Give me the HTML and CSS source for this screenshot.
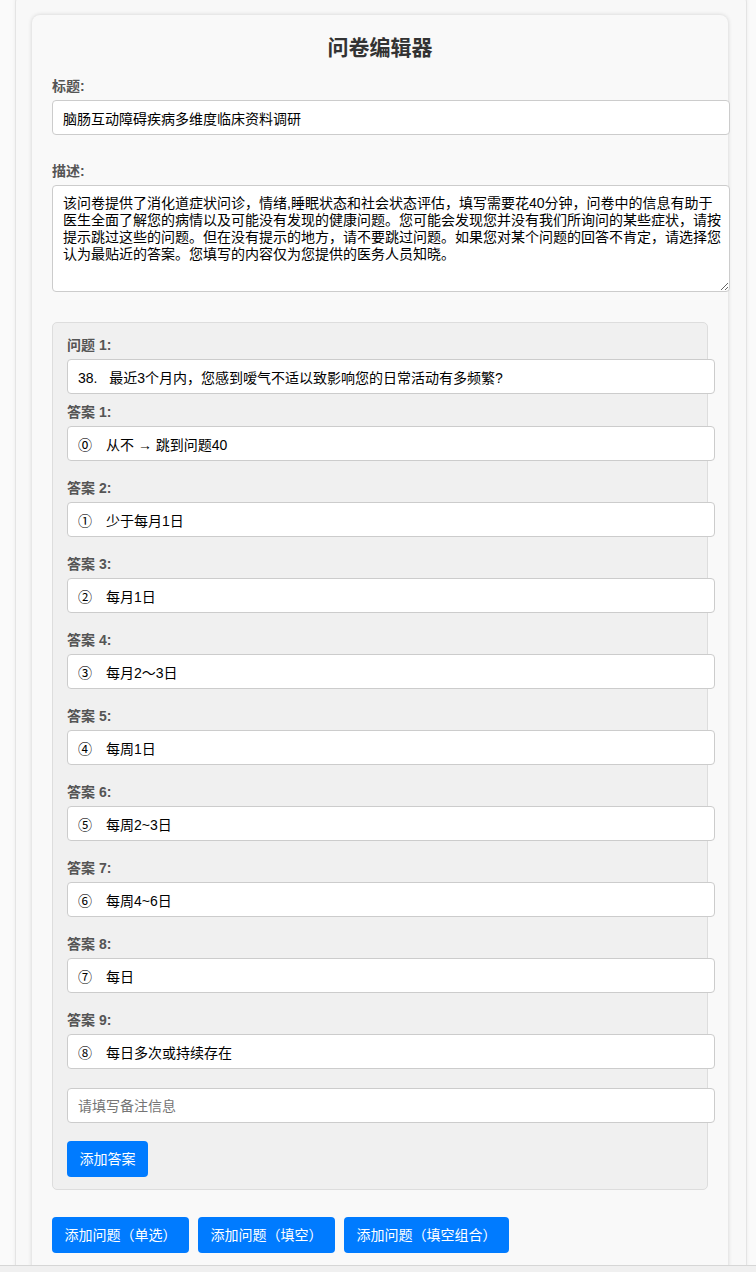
FILE: index.html
```html
<!DOCTYPE html>
<html lang="zh-CN">
<head>
    <meta charset="UTF-8">
    <meta name="viewport" content="width=device-width, initial-scale=1.0">
    <title>问卷编辑器</title>
    <link rel="stylesheet" href="styles.css">
</head>
<body>
    <div class="page">
        <div class="editor">
            <h2>问卷编辑器</h2>

            <label for="titulo">标题:</label>
            <input type="text" id="titulo" class="title-input" value="脑肠互动障碍疾病多维度临床资料调研">

            <label for="descricao">描述:</label>
            <textarea id="descricao">该问卷提供了消化道症状问诊，情绪,睡眠状态和社会状态评估，填写需要花40分钟，问卷中的信息有助于医生全面了解您的病情以及可能没有发现的健康问题。您可能会发现您并没有我们所询问的某些症状，请按提示跳过这些的问题。但在没有提示的地方，请不要跳过问题。如果您对某个问题的回答不肯定，请选择您认为最贴近的答案。您填写的内容仅为您提供的医务人员知晓。</textarea>

            <div class="question">
                <label>问题 1:</label>
                <input type="text" class="question-input" value="38.   最近3个月内，您感到嗳气不适以致影响您的日常活动有多频繁?">

                <div class="answer">
                    <label>答案 1:</label>
                    <input type="text" value="⓪　从不 → 跳到问题40">
                </div>
                <div class="answer">
                    <label>答案 2:</label>
                    <input type="text" value="①　少于每月1日">
                </div>
                <div class="answer">
                    <label>答案 3:</label>
                    <input type="text" value="②　每月1日">
                </div>
                <div class="answer">
                    <label>答案 4:</label>
                    <input type="text" value="③　每月2〜3日">
                </div>
                <div class="answer">
                    <label>答案 5:</label>
                    <input type="text" value="④　每周1日">
                </div>
                <div class="answer">
                    <label>答案 6:</label>
                    <input type="text" value="⑤　每周2~3日">
                </div>
                <div class="answer">
                    <label>答案 7:</label>
                    <input type="text" value="⑥　每周4~6日">
                </div>
                <div class="answer">
                    <label>答案 8:</label>
                    <input type="text" value="⑦　每日">
                </div>
                <div class="answer">
                    <label>答案 9:</label>
                    <input type="text" value="⑧　每日多次或持续存在">
                </div>

                <input type="text" class="remark" placeholder="请填写备注信息">
                <button>添加答案</button>
            </div>

            <div class="actions">
                <button>添加问题（单选）</button>
                <button>添加问题（填空）</button>
                <button>添加问题（填空组合）</button>
            </div>
        </div>
    </div>

    <div class="scroll-track"></div>
</body>
</html>
```

FILE: styles.css
```css
body {
    font-family: "Liberation Sans", Arial, "Noto Sans CJK SC", sans-serif;
    background-color: #fafafa;
    color: #000;
    margin: 0;
    padding: 0;
}
.page {
    width: 732px;
    box-sizing: border-box;
    margin: -6px 0 0 15px;
    padding: 20px 18px 60px 16px;
    background-color: #f8f8f8;
    border: 1px solid #e4e4e4;
    border-radius: 8px;
    box-shadow: 0 0 4px rgba(0, 0, 0, 0.06);
}
.editor {
    background-color: #f9f9f9;
    padding: 20px;
    border-radius: 8px;
    box-shadow: 0 0 4px rgba(0, 0, 0, 0.16);
}
h2 {
    margin: 0 0 17px;
    font-size: 21px;
    line-height: 26px;
    text-align: center;
    color: #333;
}
label {
    display: block;
    font-size: 14px;
    line-height: 17px;
    font-weight: bold;
    color: #555;
    margin-bottom: 5px;
}
input, textarea {
    display: block;
    width: 100%;
    padding: 0 10px;
    height: 33px;
    box-sizing: content-box;
    border: 1px solid #ccc;
    border-radius: 4px;
    background-color: #fff;
    font-family: "Liberation Sans", Arial, "Noto Sans CJK SC", sans-serif;
    font-size: 14px;
    color: #000;
    margin: 0;
}
input::placeholder {
    color: #757575;
}
.title-input {
    margin-bottom: 28px;
}
textarea {
    box-sizing: border-box;
    width: calc(100% + 22px);
    height: 107px;
    padding: 9px 6px 10px 10px;
    line-height: 17px;
    margin-bottom: 30px;
}

/* bloco de pergunta */
.question {
    background-color: #f0f0f0;
    border: 1px solid #ddd;
    border-radius: 5px;
    padding: 14px 14px 12px;
    margin-bottom: 27px;
}
.question-input {
    margin-bottom: 10px;
}
.answer {
    margin-bottom: 19px;
}
.remark {
    margin-bottom: 18px;
}
button {
    background-color: #007bff;
    color: white;
    border: none;
    border-radius: 4px;
    padding: 10px 12.5px;
    font-family: "Liberation Sans", Arial, "Noto Sans CJK SC", sans-serif;
    font-size: 14px;
    line-height: 16px;
    cursor: pointer;
}
button:hover {
    background-color: #0056b3;
}
.actions {
    display: flex;
    gap: 9px;
}
.scroll-track {
    position: fixed;
    left: 0;
    right: 0;
    bottom: 0;
    height: 6px;
    background-color: #f0f0f0;
    border-top: 1px solid #d6d6d6;
}
```
